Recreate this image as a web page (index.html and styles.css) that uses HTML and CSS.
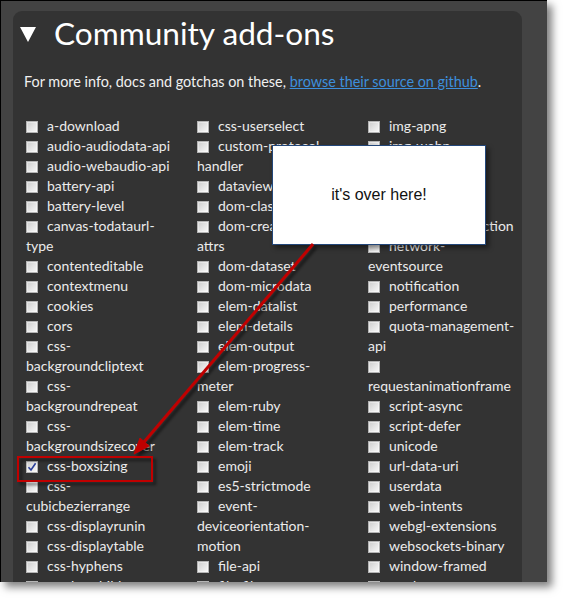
FILE: index.html
```html
<!DOCTYPE html>
<html lang="en">
<head>
<meta charset="utf-8">
<title>Community add-ons</title>
<link rel="stylesheet" href="styles.css">
</head>
<body>
<div class="shot">
  <div class="frame">
    <section class="panel">
      <h2 class="title"><svg class="tri" width="16" height="15" viewBox="0 0 16 15"><polygon points="0,0 16,0 8,15" fill="#fff"/></svg>Community add-ons</h2>
      <p class="intro">For more info, docs and gotchas on these, <a href="#">browse their source on github</a>.</p>
      <div class="cols">
        <ul class="col">
          <li><span class="cb"></span>a-download</li>
          <li><span class="cb"></span>audio-audiodata-api</li>
          <li><span class="cb"></span>audio-webaudio-api</li>
          <li><span class="cb"></span>battery-api</li>
          <li><span class="cb"></span>battery-level</li>
          <li><span class="cb"></span>canvas-todataurl-type</li>
          <li><span class="cb"></span>contenteditable</li>
          <li><span class="cb"></span>contextmenu</li>
          <li><span class="cb"></span>cookies</li>
          <li><span class="cb"></span>cors</li>
          <li><span class="cb"></span>css-backgroundcliptext</li>
          <li><span class="cb"></span>css-backgroundrepeat</li>
          <li><span class="cb"></span>css-backgroundsizecover</li>
          <li><span class="cb checked"><svg width="10" height="10" viewBox="0 0 10 10"><path d="M1.5 5.2 L4 8 L8.6 1.2" fill="none" stroke="#2a3f9a" stroke-width="1.6"/></svg></span>css-boxsizing</li>
          <li><span class="cb"></span>css-cubicbezierrange</li>
          <li><span class="cb"></span>css-displayrunin</li>
          <li><span class="cb"></span>css-displaytable</li>
          <li><span class="cb"></span>css-hyphens</li>
          <li><span class="cb"></span>css-lastchild</li>
        </ul>
        <ul class="col">
          <li><span class="cb"></span>css-userselect</li>
          <li><span class="cb"></span>custom-protocol-handler</li>
          <li><span class="cb"></span>dataview-api</li>
          <li><span class="cb"></span>dom-classlist</li>
          <li><span class="cb"></span>dom-createElement-attrs</li>
          <li><span class="cb"></span>dom-dataset</li>
          <li><span class="cb"></span>dom-microdata</li>
          <li><span class="cb"></span>elem-datalist</li>
          <li><span class="cb"></span>elem-details</li>
          <li><span class="cb"></span>elem-output</li>
          <li><span class="cb"></span>elem-progress-meter</li>
          <li><span class="cb"></span>elem-ruby</li>
          <li><span class="cb"></span>elem-time</li>
          <li><span class="cb"></span>elem-track</li>
          <li><span class="cb"></span>emoji</li>
          <li><span class="cb"></span>es5-strictmode</li>
          <li><span class="cb"></span>event-deviceorientation-motion</li>
          <li><span class="cb"></span>file-api</li>
          <li><span class="cb"></span>file-filesystem</li>
        </ul>
        <ul class="col">
          <li><span class="cb"></span>img-apng</li>
          <li><span class="cb"></span>img-webp</li>
          <li><span class="cb"></span>json</li>
          <li><span class="cb"></span>lists-reversed</li>
          <li><span class="cb"></span>mathml</li>
          <li><span class="cb"></span>network-connection</li>
          <li><span class="cb"></span>network-eventsource</li>
          <li><span class="cb"></span>notification</li>
          <li><span class="cb"></span>performance</li>
          <li><span class="cb"></span>quota-management-api</li>
          <li><span class="cb"></span>requestanimationframe</li>
          <li><span class="cb"></span>script-async</li>
          <li><span class="cb"></span>script-defer</li>
          <li><span class="cb"></span>unicode</li>
          <li><span class="cb"></span>url-data-uri</li>
          <li><span class="cb"></span>userdata</li>
          <li><span class="cb"></span>web-intents</li>
          <li><span class="cb"></span>webgl-extensions</li>
          <li><span class="cb"></span>websockets-binary</li>
          <li><span class="cb"></span>window-framed</li>
          <li><span class="cb"></span>workers-blobworkers</li>
        </ul>
      </div>
    </section>
  </div>
  <div class="popup">it's over here!</div>
  <svg class="annot" width="563" height="598" viewBox="0 0 563 598">
    <defs>
      <filter id="sh" x="-20%" y="-20%" width="140%" height="140%">
        <feDropShadow dx="3" dy="3" stdDeviation="1.6" flood-color="#000" flood-opacity="0.55"/>
      </filter>
    </defs>
    <g filter="url(#sh)" fill="none" stroke="#c00000">
      <line x1="313" y1="244" x2="144" y2="442" stroke-width="3"/>
      <polygon points="134,454 149,446 140,438" fill="#c00000" stroke-width="1"/>
      <rect x="18" y="457" width="134" height="24" stroke-width="2"/>
    </g>
  </svg>
</div>
</body>
</html>
```

FILE: styles.css
```css
* { box-sizing: border-box; }

html, body {
  margin: 0;
  padding: 0;
  background: #ffffff;
}

.shot {
  position: relative;
  width: 563px;
  height: 598px;
}

.frame {
  width: 547px;
  height: 582px;
  background: #434343;
  border-top: 1px solid #000;
  border-left: 1px solid #000;
  overflow: hidden;
  box-shadow: 5px 5px 8px rgba(0, 0, 0, 0.5);
  padding: 10px 0 0 12px;
}

.panel {
  width: 509px;
  height: 640px;
  background: #333333;
  border-radius: 9px 9px 0 0;
  padding: 4px 0 0 0;
  font-family: Lato, "Open Sans", sans-serif;
  color: #ececec;
}

.title {
  display: flex;
  align-items: center;
  margin: 0;
  padding-left: 7px;
  height: 36px;
  font-size: 31.6px;
  font-weight: 400;
  line-height: 36px;
  color: #ffffff;
}

.tri {
  flex: none;
  margin: 3px 18px 0 0;
}

.intro {
  margin: 21px 0 0 11px;
  font-size: 14.4px;
  line-height: 20px;
  color: #f0f0f0;
}

.intro a {
  color: #3d8fdc;
  text-decoration: underline;
}

.cols {
  display: grid;
  grid-template-columns: repeat(3, 148px);
  column-gap: 23px;
  margin-top: 24px;
  padding-left: 13px;
}

.col {
  list-style: none;
  margin: 0;
  padding: 0;
}

.col li {
  font-size: 14px;
  line-height: 20px;
  color: #ebebeb;
}

.cb {
  display: inline-block;
  width: 12px;
  height: 12px;
  margin-right: 9px;
  vertical-align: -2px;
  border: 1px solid #b4b4b4;
  background: linear-gradient(135deg, #cdcdcd 0%, #e6e6e6 55%, #f8f8f8 100%);
  box-shadow: inset 0 0 0 1px rgba(255, 255, 255, 0.4);
  position: relative;
}

.cb svg {
  position: absolute;
  left: 0;
  top: 0;
}

.popup {
  position: absolute;
  left: 272px;
  top: 145px;
  width: 214px;
  height: 100px;
  background: #ffffff;
  border: 1px solid #23477a;
  box-shadow: 3px 3px 5px rgba(0, 0, 0, 0.45);
  display: flex;
  align-items: center;
  justify-content: center;
  font-family: "Liberation Sans", Arial, sans-serif;
  font-size: 16px;
  color: #111111;
}

.annot {
  position: absolute;
  left: 0;
  top: 0;
  pointer-events: none;
}
```
